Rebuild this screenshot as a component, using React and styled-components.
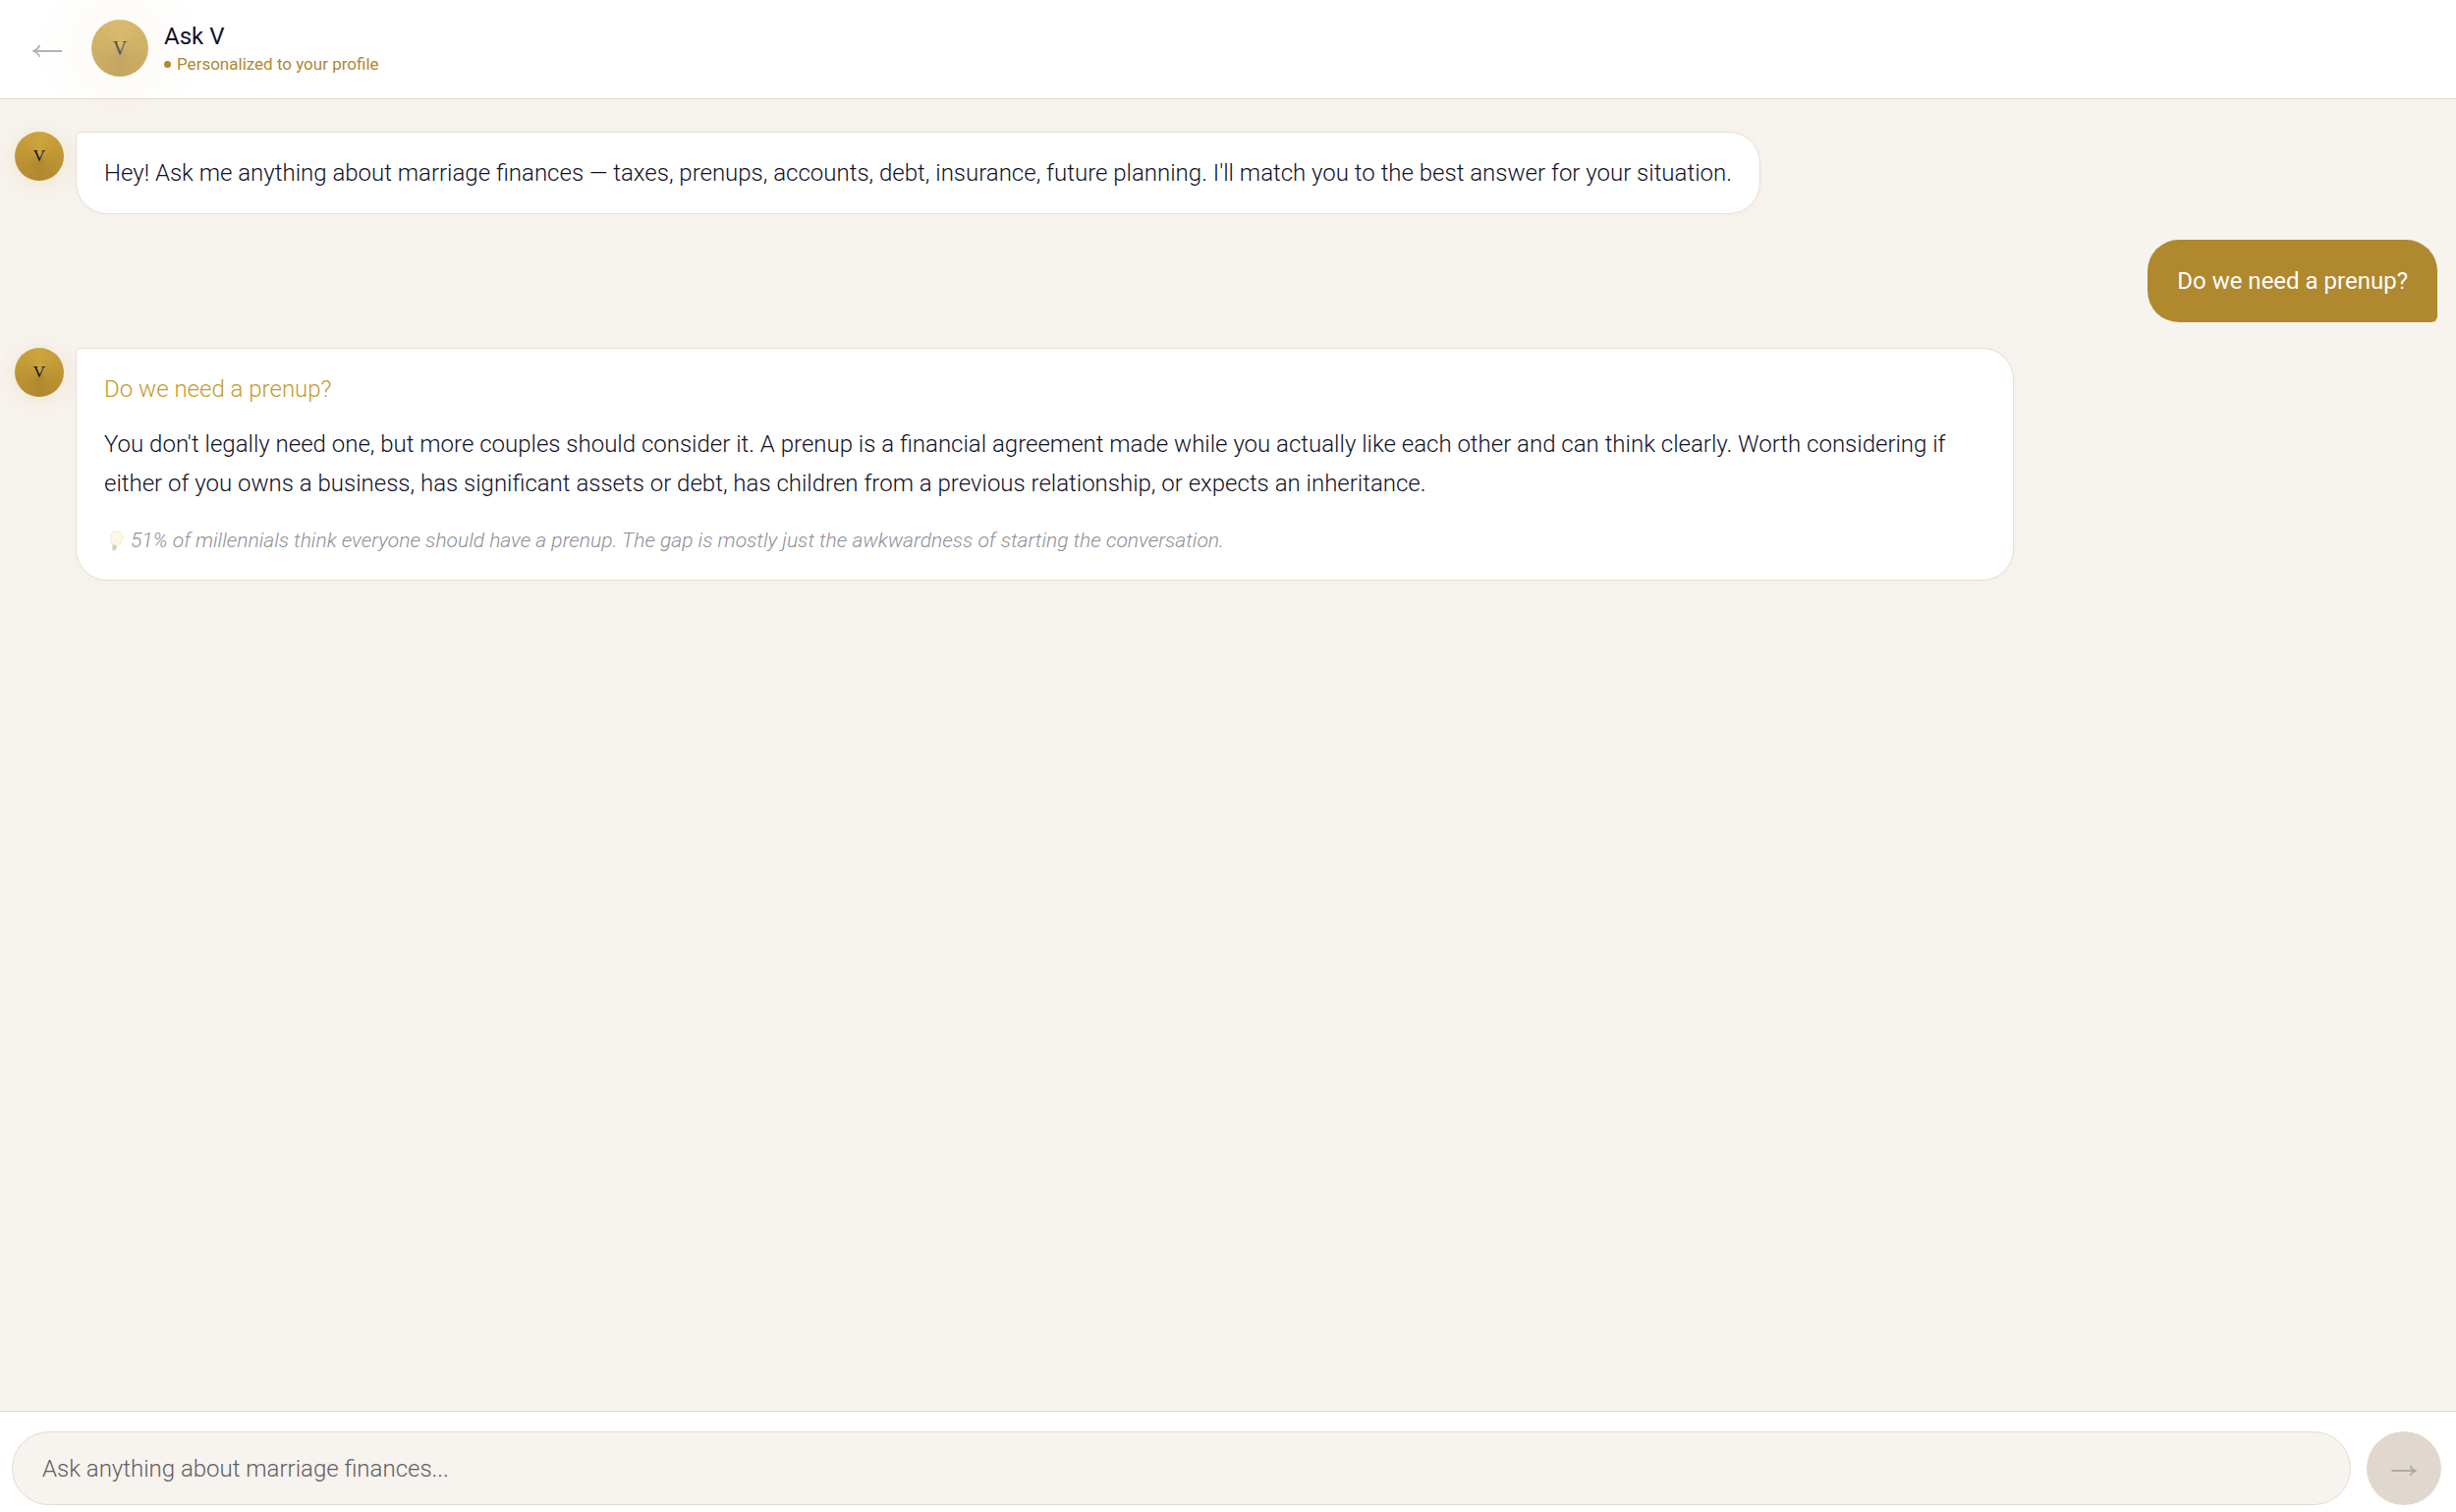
import React, { useState } from "react";
import styled, { createGlobalStyle } from "styled-components";

const GlobalStyle = createGlobalStyle`
  *, *::before, *::after { box-sizing: border-box; }
  body {
    margin: 0;
    background: #f7f3ee;
    color: #12122a;
    font-family: Roboto, "Liberation Sans", sans-serif;
    font-size: 24px;
    font-weight: 300;
    line-height: 40px;
  }
  h1, h2, p { margin: 0; font-weight: inherit; }
  button, input { font: inherit; }
`;

const Page = styled.div`
  display: flex;
  flex-direction: column;
  height: 100vh;
`;

const Header = styled.header`
  display: flex;
  align-items: center;
  gap: 16px;
  padding: 20px 20px 22px;
  background: #fff;
  border-bottom: 1px solid #e3dbd1;
`;

const BackButton = styled.button`
  display: flex;
  align-items: center;
  justify-content: center;
  width: 57px;
  height: 52px;
  padding: 6px 2px 0 0;
  border: 0;
  background: none;
  color: #b3b2b9;
  cursor: pointer;
`;

const Avatar = styled.span`
  display: flex;
  flex: none;
  align-items: center;
  justify-content: center;
  width: ${(p) => (p.$large ? 58 : 50)}px;
  height: ${(p) => (p.$large ? 58 : 50)}px;
  border-radius: 50%;
  background: conic-gradient(#cda43c, #b0882e 180deg, #cda43c);
  box-shadow: ${(p) =>
    p.$large ? "0 0 60px rgba(201, 162, 60, 0.18)" : "0 3px 24px rgba(201, 162, 60, 0.18)"};
  opacity: ${(p) => (p.$large ? 0.75 : 1)};
  font-family: "Liberation Serif", serif;
  font-size: ${(p) => (p.$large ? 20 : 17)}px;
  font-weight: 400;
  line-height: 20px;
`;

const Identity = styled.div`
  display: flex;
  flex-direction: column;
`;

const Name = styled.h1`
  font-size: 24px;
  font-weight: 400;
  line-height: 32px;
`;

const Status = styled.p`
  display: flex;
  align-items: center;
  gap: 6px;
  color: #b0882e;
  font-size: 17px;
  font-weight: 400;
  line-height: 24px;

  &::before {
    content: "";
    width: 7px;
    height: 7px;
    border-radius: 50%;
    background: currentColor;
  }
`;

const Thread = styled.main`
  display: flex;
  flex: 1;
  flex-direction: column;
  gap: 26px;
  min-height: 0;
  padding: 33px 19px 33px 15px;
  overflow-y: auto;
`;

const Row = styled.div`
  display: flex;
  align-items: flex-start;
  justify-content: ${(p) => (p.$mine ? "flex-end" : "flex-start")};
  gap: 12px;
`;

const Bubble = styled.div`
  max-width: 80%;
  padding: ${(p) => (p.$mine ? "22px 30px" : "21px 28px")};
  border: ${(p) => (p.$mine ? "0" : "1px solid #e6ded4")};
  border-radius: ${(p) => (p.$mine ? "32px 32px 6px 32px" : "6px 32px 32px 32px")};
  background: ${(p) => (p.$mine ? "#b0882e" : "#fff")};
  box-shadow: ${(p) => (p.$mine ? "none" : "0 3px 20px rgba(176, 136, 46, 0.03)")};
  color: ${(p) => (p.$mine ? "#fff" : "inherit")};
  font-weight: ${(p) => (p.$mine ? 400 : "inherit")};
`;

const Question = styled.h2`
  margin-bottom: 16px;
  color: #c79a2c;
  font-size: 24px;
`;

const Fact = styled.p`
  display: flex;
  align-items: center;
  gap: 7px;
  margin-top: 20px;
  padding-left: 4px;
  color: #8f8f99;
  font-size: 21px;
  font-style: italic;
  font-weight: 300;
  line-height: 37px;
`;

const Composer = styled.form`
  display: flex;
  gap: 16px;
  padding: 20px 15px 7px 12px;
  background: #fff;
  border-top: 1px solid #e0dace;
`;

const Field = styled.input`
  flex: 1;
  min-width: 0;
  height: 75px;
  padding: 0 30px;
  border: 1px solid #e3dcd2;
  border-radius: 38px;
  outline: 0;
  background: #f7f3ee;
  color: #12122a;

  &::placeholder { color: #606062; opacity: 1; }
`;

const SendButton = styled.button`
  display: flex;
  flex: none;
  align-items: center;
  justify-content: center;
  width: 76px;
  height: 75px;
  padding: 4px 0 0;
  border: 0;
  border-radius: 50%;
  background: #e0d8ce;
  color: #aeaaa6;
`;

const BackArrow = () => (
  <svg width="30" height="14" viewBox="0 0 30 14" fill="none" stroke="currentColor" strokeWidth="1.8" aria-hidden="true">
    <path d="M1 7H30M7.5 1.2Q5.5 5.5 1 7Q5.500 8.500 7.500 12.800" />
  </svg>
);

const SendArrow = () => (
  <svg width="26" height="12" viewBox="0 0 26 12" fill="none" stroke="currentColor" strokeWidth="1.8" aria-hidden="true">
    <path d="M.5 6H25M19.500 1Q21 4.700 25 6Q21 7.300 19.500 11" />
  </svg>
);

const Bulb = () => (
  <svg width="16" height="22" viewBox="0 0 16 22" aria-hidden="true">
    <g transform="rotate(14 8 11)">
      <path d="M8 1C4.300 1 1.800 3.600 1.800 7c0 3.200 2.400 4.300 3 8h6.400c.6-3.700 3-4.800 3-8C14.200 3.600 11.700 1 8 1Z" fill="#fdf9e8" stroke="#f7ecc0" />
      <path d="M6.500 14.500 5.800 8.500 8 10l2.200-1.500-.7 6" fill="none" stroke="#faf0cc" strokeWidth=".8" />
      <path d="M5.800 15h4.400v3.800L9 21H7l-1.200-2.200Z" fill="#d9d9da" />
      <path d="M5.800 16.500h4.400M6 18.500h4" stroke="#bcbcbe" strokeWidth=".7" />
    </g>
  </svg>
);

function VMessage({ children }) {
  return (
    <Row>
      <Avatar aria-hidden="true">V</Avatar>
      <Bubble>{children}</Bubble>
    </Row>
  );
}

export default function App() {
  const [draft, setDraft] = useState("");

  return (
    <>
      <GlobalStyle />
      <Page>
        <Header>
          <BackButton type="button" aria-label="Back">
            <BackArrow />
          </BackButton>
          <Avatar $large>V</Avatar>
          <Identity>
            <Name>Ask V</Name>
            <Status>Personalized to your profile</Status>
          </Identity>
        </Header>

        <Thread>
          <VMessage>
            <p>
              Hey! Ask me anything about marriage finances — taxes, prenups, accounts, debt,
              insurance, future planning. I'll match you to the best answer for your situation.
            </p>
          </VMessage>
          <Row $mine>
            <Bubble $mine>
              <p>Do we need a prenup?</p>
            </Bubble>
          </Row>
          <VMessage>
            <Question>Do we need a prenup?</Question>
            <p>
              You don't legally need one, but more couples should consider it. A prenup is a
              financial agreement made while you actually like each other and can think clearly.
              Worth considering if either of you owns a business, has significant assets or debt,
              has children from a previous relationship, or expects an inheritance.
            </p>
            <Fact>
              <Bulb />
              51% of millennials think everyone should have a prenup. The gap is mostly just the
              awkwardness of starting the conversation.
            </Fact>
          </VMessage>
        </Thread>

        <Composer onSubmit={(e) => e.preventDefault()}>
          <Field
            type="text"
            aria-label="Your question"
            placeholder="Ask anything about marriage finances..."
            value={draft}
            onChange={(e) => setDraft(e.target.value)}
          />
          <SendButton type="submit" aria-label="Send">
            <SendArrow />
          </SendButton>
        </Composer>
      </Page>
    </>
  );
}
